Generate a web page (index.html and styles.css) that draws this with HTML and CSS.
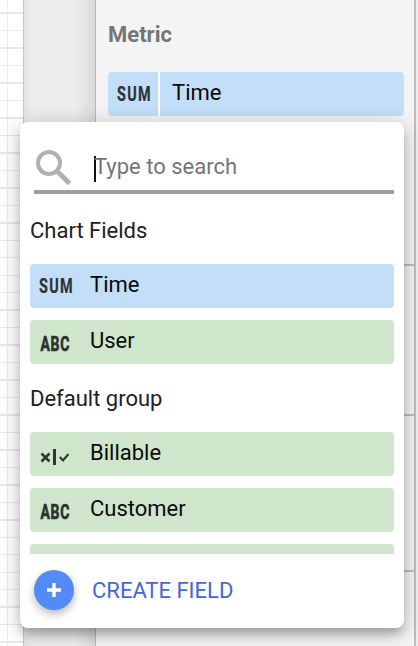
FILE: index.html
```html
<!DOCTYPE html>
<html lang="en">
<head>
<meta charset="utf-8">
<title>Metric field picker</title>
<link rel="stylesheet" href="styles.css">
</head>
<body>
<main class="editor">
  <div class="canvas"></div>
  <div class="gutter"></div>
  <aside class="panel">
    <section class="metric">
      <h2 class="heading">Metric</h2>
      <div class="chip">
        <span class="chip-type"><svg class="type" width="50" height="44"><text x="9" y="28.7" textLength="35" lengthAdjust="spacingAndGlyphs" class="sum">SUM</text></svg></span>
        <span class="chip-name">Time</span>
      </div>
    </section>
    <section class="block first"></section>
    <section class="block second"></section>
    <section class="block last"></section>
  </aside>
  <div class="edge"></div>
</main>

<div class="picker">
  <label class="search">
    <svg class="search-icon" width="36" height="36" viewBox="0 0 36 36"><circle cx="13" cy="13" r="11" fill="none" stroke="#b0b0b0" stroke-width="4"/><path d="M21 21L33.5 33.5" stroke="#b0b0b0" stroke-width="5"/></svg>
    <span class="caret"></span>
    <span class="placeholder">Type to search</span>
  </label>
  <div class="list">
    <h3 class="group">Chart Fields</h3>
    <div class="field blue"><svg class="type" width="60" height="44"><text x="9" y="28.7" textLength="35" lengthAdjust="spacingAndGlyphs" class="sum">SUM</text></svg><span>Time</span></div>
    <div class="field"><svg class="type" width="60" height="44"><text x="10.4" y="30.7" textLength="29.6" lengthAdjust="spacingAndGlyphs" class="abc">ABC</text></svg><span>User</span></div>
    <h3 class="group">Default group</h3>
    <div class="field"><svg class="type" width="60" height="44"><g fill="none" stroke="#2e372e"><path d="M11.5 21.5L19.5 29.5M19.5 21.5L11.5 29.5" stroke-width="2.5"/><path d="M24.5 17V33" stroke-width="3"/><path d="M29.8 25L33 28.5L38.5 22" stroke-width="2"/></g></svg><span>Billable</span></div>
    <div class="field"><svg class="type" width="60" height="44"><text x="10.4" y="30.7" textLength="29.6" lengthAdjust="spacingAndGlyphs" class="abc">ABC</text></svg><span>Customer</span></div>
    <div class="field"></div>
  </div>
  <div class="create">
    <span class="plus"><svg width="14" height="14"><path d="M0 7H14M7 0V14" stroke="#fff" stroke-width="3.4"/></svg></span>
    <span class="create-label">CREATE FIELD</span>
  </div>
</div>
</body>
</html>
```
FILE: styles.css
```css
* { box-sizing: border-box; }

body {
  margin: 0;
  width: 418px;
  height: 646px;
  overflow: hidden;
  font: 22px/26px Roboto, sans-serif;
  color: #0a0a0a;
}

h2, h3 { margin: 0; font-size: 22px; }

.editor { display: flex; height: 646px; }

.canvas {
  width: 24px;
  border-right: 1px solid #c8c8c8;
  background:
    linear-gradient(#ececec, #ececec) 7px 0 / 1px 100% no-repeat,
    repeating-linear-gradient(#fff 0 12.5px, #e9e9e9 12.5px 13.9px, #fff 13.9px 17.47px);
}

.gutter {
  width: 71px;
  background: linear-gradient(90deg, #e3e3e3, #ededed 8px, #ededed 52px, #dadada);
}

.panel {
  width: 319px;
  border-left: 1px solid #b8b8b8;
  background: #f4f4f4;
}

.metric { height: 266px; padding: 22px 10px 0 12px; border-bottom: 2px solid #bdbdbd; }
.heading { line-height: 26px; color: #757575; }

.chip { display: flex; gap: 2px; width: 296px; height: 44px; margin-top: 24px; background: #fff; border-radius: 4px; }
.chip-type { width: 50px; background: #c3def8; border-radius: 4px 0 0 4px; }
.chip-name { flex: 1; padding: 8px 12px; background: #c3def8; border-radius: 0 4px 4px 0; }

.block { border-bottom: 2px solid #bdbdbd; }
.first { height: 150px; }
.second { height: 156px; }
.last { height: 74px; border: 0; }

.edge { width: 4px; border-left: 2px solid #bdbdbd; background: #eee; }

.picker {
  position: absolute;
  left: 20px;
  top: 122px;
  width: 384px;
  height: 506px;
  padding: 18px 10px 0;
  background: #fff;
  border-radius: 8px;
  box-shadow: 0 8px 10px -2px rgba(0, 0, 0, .22), 0 4px 22px rgba(0, 0, 0, .24);
}

.search {
  display: flex;
  height: 54px;
  margin-left: 4px;
  padding-top: 10px;
  border-bottom: 4px solid #9e9e9e;
}
.search-icon { margin-left: 2px; }
.caret { width: 2px; height: 26px; margin: 6px 0 0 22px; background: #111; }
.placeholder { margin-top: 4px; margin-left: -2px; color: #757575; }

.list { height: 360px; overflow: hidden; }
.group { height: 70px; padding-top: 23px; font-weight: 400; line-height: 28px; color: #212121; }
.field {
  display: flex;
  height: 44px;
  margin-bottom: 12px;
  line-height: 42px;
  border-radius: 4px;
  background: #cfe6cc;
}
.blue { background: #c3def8; }
.field + .group { padding-top: 9px; height: 56px; }

.type { display: block; flex: none; fill: #2d3335; font-weight: 700; }
.sum { font-size: 19.3px; letter-spacing: 1.8px; stroke: #2d3335; stroke-width: .2px; }
.abc { font-size: 19.3px; letter-spacing: 1px; stroke: #2d332d; stroke-width: .7px; }

.create { display: flex; align-items: center; gap: 18px; padding: 16px 4px; color: #4169cf; }
.create-label { padding-top: 2px; }
.plus {
  display: flex;
  align-items: center;
  justify-content: center;
  width: 40px;
  height: 40px;
  border-radius: 50%;
  background: #528bf7;
  box-shadow: 0 4px 8px rgba(0, 0, 0, .28);
}
```
